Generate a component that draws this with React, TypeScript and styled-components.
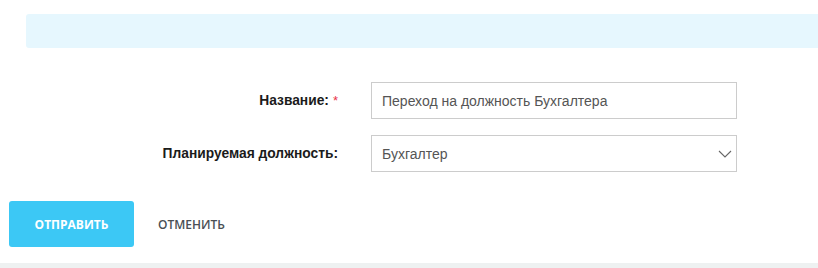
import React from "react";
import styled, { createGlobalStyle } from "styled-components";

const Global = createGlobalStyle`
  html, body { margin: 0; padding: 0; background: #ffffff; }
  body { font-family: "Liberation Sans", Arial, sans-serif; }
  * { box-sizing: border-box; }
`;

const Page = styled.div`
  width: 818px;
  height: 268px;
  padding-top: 14px;
  display: flex;
  flex-direction: column;
  overflow: hidden;
`;

const Notice = styled.div`
  margin-left: 26px;
  height: 34px;
  background: #e6f7fe;
  border-radius: 3px 0 0 3px;
`;

const Form = styled.form`
  margin-top: 34px;
  display: flex;
  flex-direction: column;
  gap: 16px;
`;

const Row = styled.div`
  display: grid;
  grid-template-columns: 338px 366px;
  column-gap: 33px;
  align-items: center;
`;

const Label = styled.label`
  text-align: right;
  font-family: "Liberation Sans", Arial, sans-serif;
  font-weight: 700;
  font-size: 13.8px;
  color: #1b1b1b;
  white-space: nowrap;
`;

const Required = styled.span`
  color: #e8334a;
  font-weight: 400;
  font-size: 13px;
  margin-left: 4px;
`;

const fieldCss = `
  width: 100%;
  border: 1px solid #cccccc;
  border-radius: 0;
  background: #ffffff;
  padding: 0 10px;
  font-family: "Liberation Sans", Arial, sans-serif;
  font-size: 14px;
  color: #555555;
  outline: none;
`;

const TextInput = styled.input<{ $h: number }>`
  ${fieldCss}
  height: ${(p) => p.$h}px;
`;

const SelectBox = styled.div<{ $h: number }>`
  ${fieldCss}
  height: ${(p) => p.$h}px;
  display: flex;
  align-items: center;
  justify-content: space-between;
  padding-right: 4px;
`;

const Chevron = styled.svg`
  width: 14px;
  height: 8px;
`;

const Actions = styled.div`
  margin-top: 29px;
  padding-left: 9px;
  display: flex;
  align-items: center;
`;

const Button = styled.button<{ $primary?: boolean }>`
  height: 46px;
  border: none;
  border-radius: 3px;
  font-family: "Open Sans", "Liberation Sans", sans-serif;
  font-size: 12px;
  font-weight: ${(p) => (p.$primary ? 700 : 600)};
  text-transform: uppercase;
  cursor: pointer;
  background: ${(p) => (p.$primary ? "#3cc8f5" : "transparent")};
  color: ${(p) => (p.$primary ? "#ffffff" : "#4a4f55")};
  width: ${(p) => (p.$primary ? "125px" : "auto")};
  padding: ${(p) => (p.$primary ? "0" : "0 24px")};
`;

const Footer = styled.div`
  margin-top: 16px;
  flex: 1;
  background: #eef1f1;
`;

export default function App() {
  return (
    <>
      <Global />
      <Page>
        <Notice />
        <Form onSubmit={(e) => e.preventDefault()}>
          <Row>
            <Label>
              Название:<Required>*</Required>
            </Label>
            <TextInput $h={37} defaultValue="Переход на должность Бухгалтера" />
          </Row>
          <Row>
            <Label>Планируемая должность:</Label>
            <SelectBox $h={37}>
              <span>Бухгалтер</span>
              <Chevron viewBox="0 0 14 8" fill="none">
                <path d="M1 1l6 6 6-6" stroke="#666" strokeWidth="1.1" />
              </Chevron>
            </SelectBox>
          </Row>
        </Form>
        <Actions>
          <Button $primary>Отправить</Button>
          <Button type="button">Отменить</Button>
        </Actions>
        <Footer />
      </Page>
    </>
  );
}
